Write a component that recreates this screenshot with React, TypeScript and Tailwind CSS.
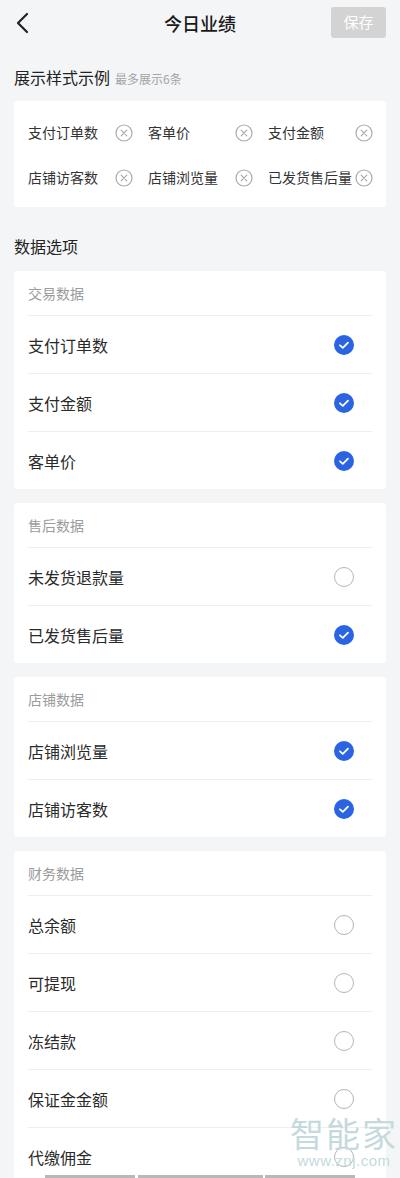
import { Fragment } from "react";

const FONT = { fontFamily: '"Noto Sans CJK SC", "Noto Sans", sans-serif' };

const preview = [
  "支付订单数",
  "客单价",
  "支付金额",
  "店铺访客数",
  "店铺浏览量",
  "已发货售后量",
];

const groups: { title: string; items: [string, boolean][] }[] = [
  {
    title: "交易数据",
    items: [
      ["支付订单数", true],
      ["支付金额", true],
      ["客单价", true],
    ],
  },
  {
    title: "售后数据",
    items: [
      ["未发货退款量", false],
      ["已发货售后量", true],
    ],
  },
  {
    title: "店铺数据",
    items: [
      ["店铺浏览量", true],
      ["店铺访客数", true],
    ],
  },
  {
    title: "财务数据",
    items: [
      ["总余额", false],
      ["可提现", false],
      ["冻结款", false],
      ["保证金金额", false],
      ["代缴佣金", false],
    ],
  },
];

function RemoveIcon() {
  return (
    <svg width="18" height="18" viewBox="0 0 18 18" className="shrink-0">
      <circle cx="9" cy="9" r="8" fill="none" stroke="#a9a9a9" strokeWidth="1.2" />
      <path d="M6.2 6.2 L11.8 11.8 M11.8 6.2 L6.2 11.8" stroke="#a9a9a9" strokeWidth="1.2" strokeLinecap="round" />
    </svg>
  );
}

function Check({ on }: { on: boolean }) {
  if (!on) {
    return <div className="w-[20px] h-[20px] rounded-full border border-[#b4b4b4]" />;
  }
  return (
    <svg width="20" height="20" viewBox="0 0 20 20">
      <circle cx="10" cy="10" r="10" fill="#2b64e3" />
      <path d="M6 10.3 L8.8 12.9 L14 7.6" fill="none" stroke="#fff" strokeWidth="1.8" strokeLinecap="round" strokeLinejoin="round" />
    </svg>
  );
}

export default function App() {
  return (
    <div className="relative min-h-screen bg-[#f4f5f7] text-[#222]" style={FONT}>
      <header className="relative h-[46px] flex items-center justify-center">
        <svg width="14" height="22" viewBox="0 0 14 22" className="absolute left-[15px] top-[12px]">
          <path d="M12 2 L3 11 L12 20" fill="none" stroke="#222" strokeWidth="2.2" strokeLinecap="round" strokeLinejoin="round" />
        </svg>
        <h1 className="text-[18px] font-medium text-[#1a1a1a]">今日业绩</h1>
        <button className="absolute right-[14px] top-[7px] w-[55px] h-[31px] rounded-[3px] bg-[#d3d3d3] text-white text-[15px]">
          保存
        </button>
      </header>

      <main className="px-[14px] pb-[20px]">
        <div className="pt-[19px] flex items-baseline gap-[5px] h-[43px]">
          <span className="text-[16px] leading-[24px] text-[#222]">展示样式示例</span>
          <span className="text-[12px] text-[#a3a3a3]">最多展示6条</span>
        </div>
        <div className="mt-[12px] bg-white rounded-[4px] pl-[14px] pt-[9px] pb-[7px] grid grid-cols-[120px_120px_120px]">
          {preview.map((p) => (
            <div key={p} className="h-[45px] flex items-center">
              <span className="w-[87px] shrink-0 text-[14px] text-[#333] whitespace-nowrap">{p}</span>
              <RemoveIcon />
            </div>
          ))}
        </div>

        <div className="mt-[27px] text-[16px] leading-[24px] text-[#222]">数据选项</div>

        <div className="mt-[13px] flex flex-col gap-[14px]">
          {groups.map((g) => (
            <section key={g.title} className="bg-white rounded-[4px] px-[14px]">
              <div className="h-[44px] flex items-center text-[14px] text-[#9b9b9b]">{g.title}</div>
              {g.items.map(([name, on]) => (
                <Fragment key={name}>
                  <div className="h-px bg-[#efefef]" />
                  <div className="h-[57px] flex items-center justify-between pr-[18px]">
                    <span className="text-[16px] text-[#2a2a2a]">{name}</span>
                    <Check on={on} />
                  </div>
                </Fragment>
              ))}
            </section>
          ))}
        </div>
      </main>

      <div className="absolute left-[290px] top-[1114px] flex flex-col items-center text-[#c5dadd] pointer-events-none">
        <span className="text-[34px] leading-[38px] tracking-[2px]">智能家</span>
        <span className="text-[15px] leading-[18px] tracking-[0.5px]" style={{ fontFamily: '"Liberation Sans", sans-serif' }}>
          www.znj.com
        </span>
      </div>
      <div className="absolute left-0 right-0 top-[1175px] flex">
        <div className="ml-[45px] w-[90px] h-[3px] bg-[#b8b8b8]" />
        <div className="ml-[3px] w-[125px] h-[3px] bg-[#b8b8b8]" />
        <div className="ml-[2px] w-[90px] h-[3px] bg-[#b8b8b8]" />
      </div>
    </div>
  );
}
